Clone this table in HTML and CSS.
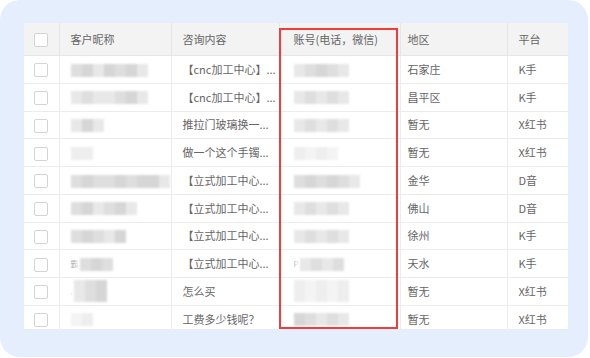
FILE: index.html
```html
<!DOCTYPE html>
<html lang="zh-CN">

<head>
    <meta charset="UTF-8">
    <title>客户咨询</title>
    <link rel="stylesheet" href="styles.css">
</head>

<body>
    <div class="panel">
        <div class="table-wrap">
            <table class="lead-table">
                <colgroup>
                    <col class="c-check">
                    <col class="c-name">
                    <col class="c-ask">
                    <col class="c-acct">
                    <col class="c-area">
                    <col class="c-plat">
                </colgroup>
                <thead>
                    <tr>
                        <th><span class="check"></span></th>
                        <th>客户昵称</th>
                        <th>咨询内容</th>
                        <th class="acct">账号(电话，微信)</th>
                        <th class="area">地区</th>
                        <th>平台</th>
                    </tr>
                </thead>
                <tbody>
                    <tr>
                        <td><span class="check"></span></td>
                        <td><span class="mosaic w7"><i></i><i class="d"></i><i class="l"></i><i class="d"></i><i></i><i class="d"></i><i class="l"></i></span></td>
                        <td>【cnc加工中心】...</td>
                        <td class="acct"><span class="mosaic w5"><i class="l"></i><i></i><i class="d"></i><i></i><i class="l"></i></span></td>
                        <td class="area">石家庄</td>
                        <td>K手</td>
                    </tr>
                    <tr>
                        <td><span class="check"></span></td>
                        <td><span class="mosaic w7"><i class="l"></i><i></i><i class="l"></i><i class="l"></i><i></i><i class="d"></i><i class="l"></i></span></td>
                        <td>【cnc加工中心】...</td>
                        <td class="acct"><span class="mosaic w5"><i class="l"></i><i></i><i class="l"></i><i></i><i class="l"></i></span></td>
                        <td class="area">昌平区</td>
                        <td>K手</td>
                    </tr>
                    <tr>
                        <td><span class="check"></span></td>
                        <td><span class="mosaic w3"><i class="l"></i><i class="d"></i><i class="l"></i></span></td>
                        <td>推拉门玻璃换一...</td>
                        <td class="acct"><span class="mosaic w5"><i class="l"></i><i></i><i class="l"></i><i></i><i class="l"></i></span></td>
                        <td class="area">暂无</td>
                        <td>X红书</td>
                    </tr>
                    <tr>
                        <td><span class="check"></span></td>
                        <td><span class="mosaic w2 pale"><i></i><i class="d"></i></span></td>
                        <td>做一个这个手镯...</td>
                        <td class="acct"><span class="mosaic w4 pale"><i></i><i class="l"></i><i></i><i class="l"></i></span></td>
                        <td class="area">暂无</td>
                        <td>X红书</td>
                    </tr>
                    <tr>
                        <td><span class="check"></span></td>
                        <td><span class="mosaic w9"><i></i><i class="d"></i><i></i><i></i><i class="d"></i><i></i><i class="d"></i><i class="d"></i><i class="l"></i></span></td>
                        <td>【立式加工中心...</td>
                        <td class="acct"><span class="mosaic w6"><i></i><i class="d"></i><i></i><i class="d"></i><i></i><i class="l"></i></span></td>
                        <td class="area">金华</td>
                        <td>D音</td>
                    </tr>
                    <tr>
                        <td><span class="check"></span></td>
                        <td><span class="mosaic w6"><i></i><i class="d"></i><i class="l"></i><i></i><i class="d"></i><i class="l"></i></span></td>
                        <td>【立式加工中心...</td>
                        <td class="acct"><span class="mosaic w5"><i class="l"></i><i></i><i class="l"></i><i></i><i class="l"></i></span></td>
                        <td class="area">佛山</td>
                        <td>D音</td>
                    </tr>
                    <tr>
                        <td><span class="check"></span></td>
                        <td><span class="mosaic w5"><i></i><i class="d"></i><i></i><i class="l"></i><i class="d"></i></span></td>
                        <td>【立式加工中心...</td>
                        <td class="acct"><span class="mosaic w5"><i class="l"></i><i></i><i class="l"></i><i></i><i class="l"></i></span></td>
                        <td class="area">徐州</td>
                        <td>K手</td>
                    </tr>
                    <tr>
                        <td><span class="check"></span></td>
                        <td><span class="lead">霸</span><span class="mosaic w3"><i></i><i class="d"></i><i></i></span></td>
                        <td>【立式加工中心...</td>
                        <td class="acct"><span class="lead">P</span><span class="mosaic w4"><i class="l"></i><i></i><i class="l"></i><i></i></span></td>
                        <td class="area">天水</td>
                        <td>K手</td>
                    </tr>
                    <tr>
                        <td><span class="check"></span></td>
                        <td><span class="lead">,</span><span class="mosaic w3 tall"><i class="l"></i><i></i><i class="d"></i></span></td>
                        <td>怎么买</td>
                        <td class="acct"><span class="mosaic w5 tall pale"><i></i><i class="l"></i><i></i><i class="l"></i><i></i></span></td>
                        <td class="area">暂无</td>
                        <td>X红书</td>
                    </tr>
                    <tr>
                        <td><span class="check"></span></td>
                        <td><span class="mosaic w2 pale"><i class="l"></i><i></i></span></td>
                        <td>工费多少钱呢？</td>
                        <td class="acct"><span class="mosaic w5"><i class="d"></i><i></i><i class="l"></i><i></i><i class="l"></i></span></td>
                        <td class="area">暂无</td>
                        <td>X红书</td>
                    </tr>
                </tbody>
            </table>
            <div class="highlight"></div>
        </div>
    </div>
</body>

</html>
```

FILE: styles.css
```css
html,
body {
    margin: 0;
    padding: 0;
    background: #fff;
}

body {
    width: 590px;
    height: 358px;
    font-family: "Noto Sans CJK SC", "Noto Sans", sans-serif;
}

.panel {
    width: 588px;
    height: 357px;
    box-sizing: border-box;
    padding: 23px 0 0 24px;
    background: #e4eefc;
    border-radius: 20px;
}

.table-wrap {
    position: relative;
    width: 544px;
    height: 306px;
    overflow: hidden;
    background: #fff;
}

.lead-table {
    width: 544px;
    table-layout: fixed;
    border-collapse: collapse;
    font-size: 11px;
    line-height: 14px;
    color: #666;
}

.c-check { width: 35px; }
.c-name { width: 112px; }
.c-ask { width: 108px; }
.c-acct { width: 121px; }
.c-area { width: 107px; }
.c-plat { width: 61px; }

.lead-table th,
.lead-table td {
    padding: 0 0 1px 11px;
    text-align: left;
    white-space: nowrap;
    overflow: hidden;
    border-left: 1px solid #ececec;
    border-bottom: 1px solid #ececec;
}

.lead-table th {
    height: 31px;
    font-weight: normal;
    color: #666;
    background: #f3f3f3;
    border-left-color: #e6e6e6;
    border-bottom-color: #e6e6e6;
}

.lead-table td {
    box-sizing: border-box;
    height: 27.75px;
}

.lead-table th:first-child,
.lead-table td:first-child {
    padding: 0;
    text-align: center;
    border-left: none;
}

.lead-table .acct {
    padding-left: 14px;
}

.lead-table .area {
    padding-left: 7px;
}

.check {
    display: inline-block;
    width: 12px;
    height: 12px;
    border: 1px solid #d4d4d4;
    border-radius: 2px;
    background: #fff;
    vertical-align: middle;
}

/* pixelated, blurred private values */
.mosaic {
    display: inline-flex;
    vertical-align: middle;
    height: 13px;
    filter: blur(1.2px);
    box-shadow: 0 0 6px 4px #fff;
    background: #fff;
}

.mosaic i {
    display: block;
    width: 11px;
    height: 100%;
    background: #dedede;
}

.mosaic i.d { background: #d6d6d6; }
.mosaic i.l { background: #e8e8e8; }
.mosaic.pale i { background: #eeeeee; }
.mosaic.pale i.l { background: #f4f4f4; }
.mosaic.tall { height: 22px; }

.mosaic.w2 { width: 22px; }
.mosaic.w3 { width: 33px; }
.mosaic.w4 { width: 44px; }
.mosaic.w5 { width: 55px; }
.mosaic.w6 { width: 66px; }
.mosaic.w7 { width: 77px; }
.mosaic.w9 { width: 99px; }

.lead {
    display: inline-block;
    margin-right: 1px;
    font-size: 8px;
    color: #999;
    vertical-align: middle;
}

.highlight {
    position: absolute;
    left: 255px;
    top: 5px;
    width: 115px;
    height: 297px;
    border: 2px solid #f23b3b;
}
```
